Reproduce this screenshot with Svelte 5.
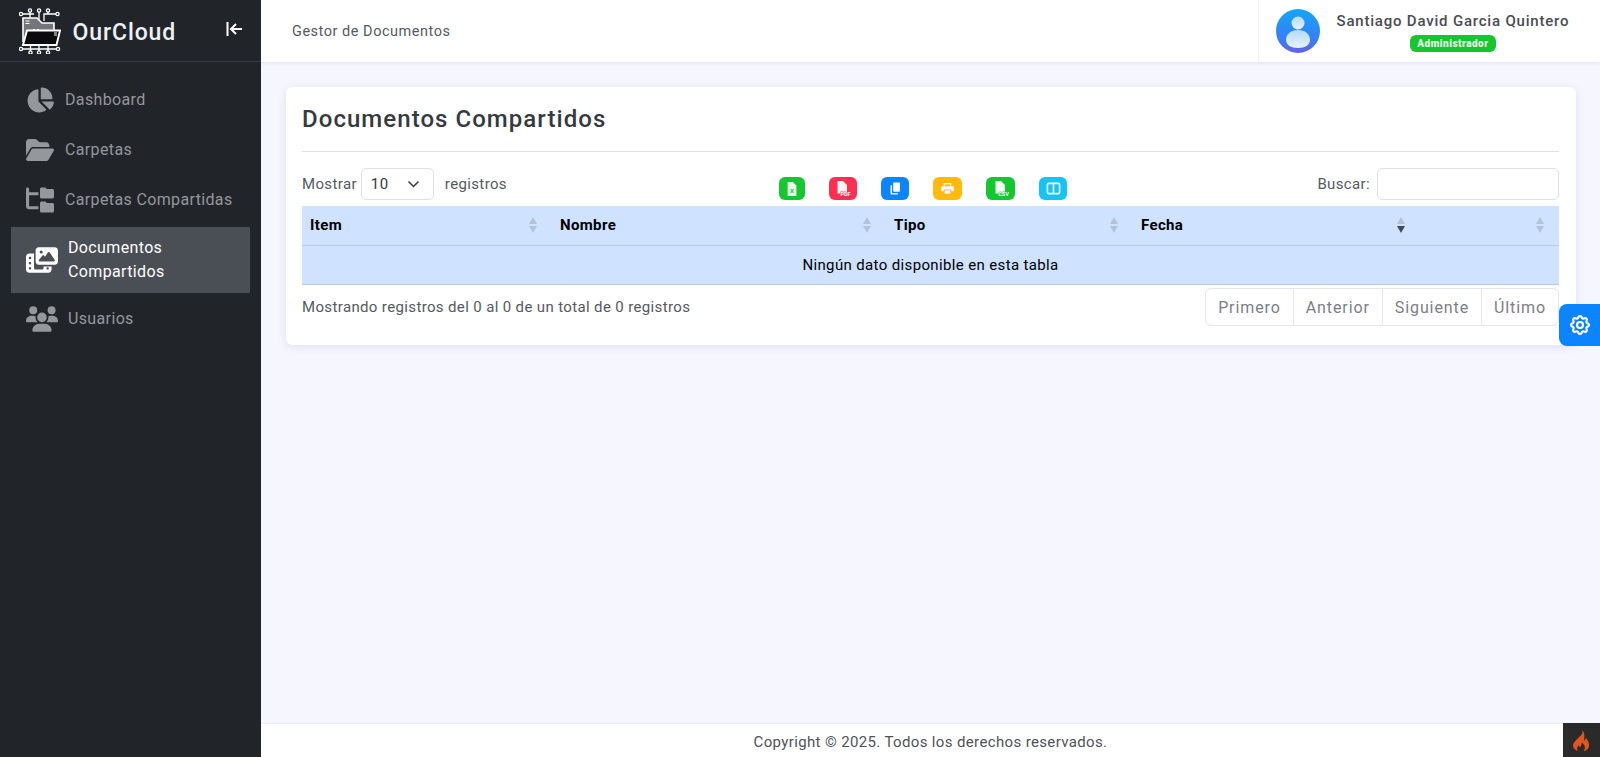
<script>
  const menu = [
    { label: 'Dashboard', w: 28, vb: '0 0 576 512', d: 'M304 240V16.6c0-9 7-16.6 16-16.6C443.7 0 544 100.3 544 224c0 9-7.6 16-16.6 16H304zM32 272C32 150.7 122.1 50.3 239 34.3c9.2-1.3 17 6.1 17 15.4V288L412.5 444.5c6.7 6.7 6.2 17.7-1.5 23.1C371.8 495.6 323.8 512 272 512C139.5 512 32 404.6 32 272zm526.4 16c9.3 0 16.6 7.8 15.4 17c-7.7 55.9-34.6 105.6-73.9 142.3c-6 5.6-15.4 5.2-21.2-.7L320 288H558.4z' },
    { label: 'Carpetas', w: 28, vb: '0 0 576 512', d: 'M88.7 223.8L0 375.8V96C0 60.7 28.7 32 64 32H181.5c17 0 33.3 6.7 45.3 18.7l26.5 26.5c12 12 28.3 18.7 45.3 18.7H416c35.3 0 64 28.7 64 64v32H144c-22.8 0-43.8 12.1-55.3 31.8zm27.6 16.1C122.1 230 132.6 224 144 224H544c11.5 0 22 6.1 27.7 16.1s5.7 22.2-.1 32.1l-112 192C453.9 474 443.4 480 432 480H32c-11.5 0-22-6.1-27.7-16.1s-5.7-22.2 .1-32.1l112-192z' },
    { label: 'Carpetas Compartidas', w: 28, vb: '0 0 576 512', d: 'M64 32C64 14.3 49.7 0 32 0S0 14.3 0 32v96V384c0 35.3 28.7 64 64 64H256V384H64V160H256V96H64V32zM288 192c0 17.7 14.3 32 32 32H544c17.7 0 32-14.3 32-32V64c0-17.7-14.3-32-32-32H445.3c-8.5 0-16.6-3.4-22.6-9.4L409.4 9.4c-6-6-14.1-9.4-22.6-9.4H320c-17.7 0-32 14.3-32 32V192zm0 288c0 17.7 14.3 32 32 32H544c17.7 0 32-14.3 32-32V352c0-17.7-14.3-32-32-32H445.3c-8.5 0-16.6-3.4-22.6-9.4l-13.3-13.3c-6-6-14.1-9.4-22.6-9.4H320c-17.7 0-32 14.3-32 32V480z' },
    { label: 'Documentos Compartidos', active: true, w: 32, vb: '0 0 640 512', d: 'M256 0H576c35.3 0 64 28.7 64 64V288c0 35.3-28.7 64-64 64H256c-35.3 0-64-28.7-64-64V64c0-35.3 28.7-64 64-64zM476 106.7C471.5 100 464 96 456 96s-15.5 4-20 10.7l-56 84L362.7 169c-4.6-5.7-11.5-9-18.7-9s-14.2 3.3-18.7 9l-64 80c-5.8 7.2-6.9 17.1-2.9 25.4s12.4 13.6 21.6 13.6h80 48H552c8.9 0 17-4.9 21.2-12.7s3.7-17.3-1.2-24.6l-96-144zM336 96a32 32 0 1 0 -64 0 32 32 0 1 0 64 0zM64 128h96V384v32c0 17.7 14.3 32 32 32H320c17.7 0 32-14.3 32-32V384H512v64c0 35.3-28.7 64-64 64H64c-35.3 0-64-28.7-64-64V192c0-35.3 28.7-64 64-64zm8 64c-8.8 0-16 7.2-16 16v16c0 8.8 7.2 16 16 16H88c8.8 0 16-7.2 16-16V208c0-8.8-7.2-16-16-16H72zm0 104c-8.8 0-16 7.2-16 16v16c0 8.8 7.2 16 16 16H88c8.8 0 16-7.2 16-16V312c0-8.8-7.2-16-16-16H72zm0 104c-8.8 0-16 7.2-16 16v16c0 8.8 7.2 16 16 16H88c8.8 0 16-7.2 16-16V416c0-8.8-7.2-16-16-16H72zm336 16v16c0 8.8 7.2 16 16 16h16c8.8 0 16-7.2 16-16V416c0-8.8-7.2-16-16-16H424c-8.8 0-16 7.2-16 16z' },
    { label: 'Usuarios', w: 32, vb: '0 0 640 512', d: 'M144 0a80 80 0 1 1 0 160A80 80 0 1 1 144 0zM512 0a80 80 0 1 1 0 160A80 80 0 1 1 512 0zM0 298.7C0 239.8 47.8 192 106.7 192h42.7c15.9 0 31 3.5 44.6 9.7c-1.3 7.2-1.9 14.7-1.9 22.3c0 38.2 16.8 72.5 43.3 96c-.2 0-.4 0-.7 0H21.3C9.6 320 0 310.4 0 298.7zM405.3 320c-.2 0-.4 0-.7 0c26.6-23.5 43.3-57.8 43.3-96c0-7.6-.7-15-1.9-22.3c13.6-6.3 28.7-9.7 44.6-9.7h42.7C592.2 192 640 239.8 640 298.7c0 11.8-9.6 21.3-21.3 21.3H405.3zM224 224a96 96 0 1 1 192 0 96 96 0 1 1 -192 0zM128 485.3C128 411.7 187.7 352 261.3 352H378.7C452.3 352 512 411.7 512 485.3c0 14.7-11.9 26.7-26.7 26.7H154.7c-14.7 0-26.7-11.9-26.7-26.7z' }
  ];

  const columns = [
    { label: 'Item', width: 250 },
    { label: 'Nombre', width: 334 },
    { label: 'Tipo', width: 247 },
    { label: 'Fecha', width: 287, sorted: true },
    { label: '', width: 139 }
  ];

  const pages = ['Primero', 'Anterior', 'Siguiente', 'Último'];

  const tools = [
    { name: 'excel', color: '#14c72e', w: 26, tag: 'X', file: true },
    { name: 'pdf', color: '#ff2e53', w: 28, tag: 'PDF', file: true },
    { name: 'copy', color: '#0a84ff', w: 28 },
    { name: 'print', color: '#ffba0c', w: 29 },
    { name: 'csv', color: '#14c72e', w: 29, tag: 'CSV', file: true },
    { name: 'cols', color: '#14c4f2', w: 28 }
  ];
</script>

<div class="layout">
  <aside class="sidebar">
    <div class="brand">
      <svg class="logo" viewBox="19 7 42 46" fill="none" stroke="#fff" stroke-width="1.3">
        <circle cx="21" cy="13" r="1.6"/><circle cx="30" cy="9.500" r="1.6"/><circle cx="39" cy="9.500" r="1.6"/><circle cx="48" cy="9.500" r="1.6"/><circle cx="57.500" cy="13" r="1.6"/>
        <circle cx="21" cy="48" r="1.6"/><circle cx="30.500" cy="51.500" r="1.6"/><circle cx="39" cy="51.500" r="1.6"/><circle cx="48" cy="51.500" r="1.6"/><circle cx="58" cy="48" r="1.6"/>
        <path d="M22.500 13H34M30 11v6M39 11v8M48 11v2h-4v7M44 13h12M22.500 48h34M30.500 43v7M39 43v7M48 43v7"/>
        <path d="M23 41V17h14l5 5h12v8" fill="#737578" stroke-width="1.6"/>
        <path d="M23 44l4-14.500h33L56.500 44z" fill="#0b0b0d" stroke-width="1.9"/>
        <path d="M25.500 20h4M25.500 22.500h4M33 28.500h2M37 28.500h2M54 32h3M54 34h3" stroke-width="1"/>
      </svg>
      <span class="brand-name">OurCloud</span>
      <svg class="collapse" viewBox="0 0 18 14" fill="none" stroke="#fff" stroke-width="2">
        <path d="M1.500 0v14M16 7H5M10 2L5 7l5 5"/>
      </svg>
    </div>
    <nav class="menu">
      {#each menu as item}
        <a href="#top" class="menu-item" class:active={item.active}>
          <svg class="menu-icon" style="width:{item.w}px" viewBox={item.vb} fill="currentColor"><path d={item.d}/></svg>
          <span class:wide={item.w === 32}>{item.label}</span>
        </a>
      {/each}
    </nav>
  </aside>

  <div class="main">
    <header class="topbar">
      <div class="crumb">Gestor de Documentos</div>
      <div class="user">
        <svg class="avatar" viewBox="0 0 44 44">
          <defs>
            <linearGradient id="av" x1="0" y1="0" x2="0" y2="1">
              <stop offset="0" stop-color="#12a6f8"/><stop offset="0.7" stop-color="#3a7df6"/><stop offset="1" stop-color="#6a5fe8"/>
            </linearGradient>
            <linearGradient id="pf" x1="0" y1="0" x2="0" y2="1">
              <stop offset="0" stop-color="#b4dcfa"/><stop offset="1" stop-color="#e6f2fd"/>
            </linearGradient>
          </defs>
          <circle cx="22" cy="22" r="22" fill="url(#av)"/>
          <circle cx="22" cy="14" r="6.500" fill="url(#pf)"/>
          <path d="M10 31c0-6 5-10 12-10s12 4 12 10c0 5-5 8-12 8s-12-3-12-8z" fill="url(#pf)"/>
        </svg>
        <div class="user-info">
          <div class="user-name">Santiago David Garcia Quintero</div>
          <span class="role">Administrador</span>
        </div>
      </div>
    </header>

    <main class="content">
      <section class="card">
        <h1>Documentos Compartidos</h1>
        <div class="controls">
          <div class="length">
            <span>Mostrar</span>
            <div class="select">10
              <svg viewBox="0 0 12 8" fill="none" stroke="#343a40" stroke-width="1.5"><path d="M1 1.500l5 5 5-5"/></svg>
            </div>
            <span class="after">registros</span>
          </div>
          <div class="tools">
            {#each tools as tool}
              <button class="tool" style="background:{tool.color};width:{tool.w}px" aria-label={tool.name}>
                {#if tool.tag === 'X'}
                  <svg viewBox="0 0 16 18" width="14" height="16">
                    <path d="M3 1h6l4 4v12H3z" fill="#fff" fill-opacity="0.9"/>
                    <text x="8" y="14" font-size="7" font-weight="700" font-family="Roboto, sans-serif" text-anchor="middle" fill={tool.color}>X</text>
                  </svg>
                {:else if tool.file}
                  <svg viewBox="0 0 18 18" width="18" height="18">
                    <path d="M3.500 1h5.500l4 4v8.500H3.500z" fill="#fff" fill-opacity="0.95"/>
                    <text x="11.500" y="15.500" font-size="5.500" font-weight="700" font-family="Roboto, sans-serif" text-anchor="middle" letter-spacing="0" fill="#fff" stroke={tool.color} stroke-width="1" paint-order="stroke">{tool.tag}</text>
                  </svg>
                {:else if tool.name === 'copy'}
                  <svg viewBox="0 0 16 16" width="15" height="15" fill="#fff">
                    <path d="M6.500 1.500h5.200a1 1 0 0 1 1 1v8a1 1 0 0 1-1 1H6.500a1 1 0 0 1-1-1v-8a1 1 0 0 1 1-1z"/>
                    <path d="M4.300 4.500v7.700a.9.900 0 0 0 .9.900h5.300v1.400H4a1.300 1.300 0 0 1-1.300-1.300V4.500z"/>
                  </svg>
                {:else if tool.name === 'print'}
                  <svg viewBox="0 0 16 16" width="15" height="15" fill="#fff">
                    <path d="M4 2h8v3h-1.400V3.400H5.400V5H4z"/>
                    <path d="M2.500 5.500h11a1.200 1.200 0 0 1 1.200 1.200v4.100H12V9H4v1.800H1.300V6.700a1.200 1.200 0 0 1 1.200-1.200z"/>
                    <path d="M5 10h6v3.500H5z"/>
                  </svg>
                {:else}
                  <svg viewBox="0 0 16 16" width="15" height="15" fill="none" stroke="#fff" stroke-width="1.700">
                    <rect x="1.500" y="2.500" width="13" height="11" rx="1.500"/><path d="M8 3v10"/>
                  </svg>
                {/if}
              </button>
            {/each}
          </div>
          <label class="search">Buscar: <input type="text" /></label>
        </div>

        <table>
          <colgroup>
            {#each columns as col}<col style="width:{col.width}px" />{/each}
          </colgroup>
          <thead>
            <tr>
              {#each columns as col}
                <th>
                  <div class="th-inner">
                    <span>{col.label}</span>
                    <span class="sort">
                      <i class="up"></i>
                      <i class="down" class:on={col.sorted}></i>
                    </span>
                  </div>
                </th>
              {/each}
            </tr>
          </thead>
          <tbody>
            <tr><td colspan="5">Ningún dato disponible en esta tabla</td></tr>
          </tbody>
        </table>

        <div class="table-foot">
          <div class="info">Mostrando registros del 0 al 0 de un total de 0 registros</div>
          <div class="pager">
            {#each pages as page}<a href="#top">{page}</a>{/each}
          </div>
        </div>
      </section>
    </main>

    <footer class="footer">Copyright © 2025. Todos los derechos reservados.</footer>
  </div>

  <button class="settings" aria-label="Ajustes">
    <svg viewBox="0 0 24 24" width="24" height="24" fill="none" stroke="#fff" stroke-width="2.200" stroke-linejoin="round">
      <path d="M10.325 4.317c.426-1.756 2.924-1.756 3.35 0a1.724 1.724 0 0 0 2.573 1.066c1.543-.94 3.31.826 2.37 2.37a1.724 1.724 0 0 0 1.065 2.572c1.756.426 1.756 2.924 0 3.35a1.724 1.724 0 0 0-1.066 2.573c.94 1.543-.826 3.31-2.37 2.37a1.724 1.724 0 0 0-2.572 1.065c-.426 1.756-2.924 1.756-3.35 0a1.724 1.724 0 0 0-2.573-1.066c-1.543.94-3.31-.826-2.37-2.37a1.724 1.724 0 0 0-1.065-2.572c-1.756-.426-1.756-2.924 0-3.35a1.724 1.724 0 0 0 1.066-2.573c-.94-1.543.826-3.31 2.37-2.37c1 .608 2.296.07 2.572-1.065z"/>
      <circle cx="12" cy="12" r="3"/>
    </svg>
  </button>

  <div class="ci-bar">
    <svg viewBox="0 0 20 22" width="19" height="21">
      <path d="M11 0c1 4-2 6-5 9C3 12 1 14 1 16c0 3 2 5 5 6-1-2-1-4 1-6 0 1 1 2 2 1.500 1-1 .5-3 1.500-4.500 2 2 3.500 4 3 6.500-.2 1.200-.8 2-1.500 3 3-.5 6-3 6-6.500 0-3.500-2-6-3.500-8-.2 1.500-.8 2.500-2 3C13 8 14 4 11 0z" fill="#e0561c"/>
    </svg>
  </div>
</div>

<style>
  :global(body) {
    margin: 0;
    background: #f6f6fe;
    font-family: Roboto, 'Liberation Sans', sans-serif;
    font-size: 15px;
    letter-spacing: 0.36px;
    color: #555a60;
  }

  .layout {
    display: flex;
    height: 757px;
    overflow: hidden;
  }

  .sidebar {
    width: 261px;
    flex-shrink: 0;
    background: #212529;
  }

  .brand {
    display: flex;
    align-items: center;
    height: 62px;
    box-sizing: border-box;
    padding: 0 17px 0 19px;
    border-bottom: 1px solid #353a42;
  }

  .logo {
    width: 42px;
    height: 46px;
    flex-shrink: 0;
  }

  .brand-name {
    margin-left: 11.5px;
    padding-top: 3px;
    font-size: 23px;
    letter-spacing: 0.9px;
    font-weight: 500;
    color: #eef1f4;
  }

  .collapse {
    width: 18px;
    height: 14px;
    margin-left: auto;
    margin-bottom: 4px;
  }

  .menu {
    display: flex;
    flex-direction: column;
    align-items: stretch;
    padding: 12.5px 11px 0;
  }

  .menu-item {
    display: flex;
    align-items: center;
    gap: 11px;
    height: 50px;
    padding: 0 15px;
    color: #94979c;
    font-size: 16px;
    text-decoration: none;
    line-height: 24px;
  }

  .menu-item.active {
    height: 66px;
    margin: 2px 0 1px;
    background: #4a4e55;
    color: #fff;
  }

  .menu-item .wide {
    margin-left: -1px;
    width: 130px;
  }

  .menu-icon {
    flex-shrink: 0;
    height: 26px;
  }

  .main {
    flex: 1;
    min-width: 0;
    display: flex;
    flex-direction: column;
  }

  .topbar {
    display: flex;
    justify-content: space-between;
    height: 62px;
    flex-shrink: 0;
    background: #fff;
    box-shadow: 0 1px 4px rgba(90, 90, 200, 0.14);
  }

  .crumb {
    align-self: center;
    padding-left: 31px;
    font-size: 14.5px;
    letter-spacing: 0.52px;
  }

  .user {
    display: flex;
    align-items: center;
    width: 342px;
    box-sizing: border-box;
    padding-left: 17px;
    border-left: 1px solid #eef0f4;
  }

  .avatar {
    width: 44px;
    height: 44px;
    flex-shrink: 0;
  }

  .user-info {
    margin-left: 16.5px;
    padding-top: 2px;
    text-align: center;
  }

  .user-name {
    font-weight: 500;
    font-size: 15px;
    letter-spacing: 0.8px;
    color: #4a4d52;
  }

  .role {
    display: inline-block;
    margin-top: 5px;
    padding: 0 7px;
    height: 17px;
    line-height: 17px;
    border-radius: 6px;
    background: #14c72e;
    color: #e8fbea;
    font-size: 10px;
    letter-spacing: 0.5px;
    font-weight: 900;
    vertical-align: top;
  }

  .content {
    flex: 1;
    padding: 25px 24px 0 25px;
  }

  .card {
    background: #fff;
    border-radius: 6px;
    padding: 0 17px 19px 16px;
    box-shadow: 0 2px 8px rgba(90, 90, 200, 0.14);
  }

  h1 {
    margin: 0;
    padding: 17px 0 16px;
    line-height: 31px;
    font-size: 24px;
    letter-spacing: 1.05px;
    font-weight: 500;
    color: #343a40;
    border-bottom: 1px solid #dee2e6;
  }

  .controls {
    position: relative;
    display: flex;
    justify-content: space-between;
    align-items: flex-start;
    height: 54px;
    padding-top: 16px;
    box-sizing: border-box;
  }

  .length {
    display: flex;
    align-items: center;
    gap: 4px;
    height: 32px;
  }

  .select {
    display: flex;
    align-items: center;
    justify-content: space-between;
    width: 73px;
    height: 32px;
    box-sizing: border-box;
    padding: 0 13px 0 9px;
    border: 1px solid #dee2e6;
    border-radius: 5px;
    color: #343a40;
  }

  .select svg {
    width: 13px;
    height: 8px;
  }

  .after {
    margin-left: 7px;
  }

  .tools {
    position: absolute;
    left: 477px;
    top: 25px;
    display: flex;
    gap: 24px;
  }

  .tool {
    display: flex;
    align-items: center;
    justify-content: center;
    height: 23px;
    padding: 0;
    border: none;
    border-radius: 6px;
  }

  .search {
    display: flex;
    align-items: center;
    gap: 7px;
    height: 32px;
  }

  .search input {
    width: 182px;
    height: 32px;
    box-sizing: border-box;
    border: 1px solid #dee2e6;
    border-radius: 5px;
    background: #fff;
  }

  table {
    width: 100%;
    table-layout: fixed;
    border-collapse: separate;
    border-spacing: 0;
    background: #cfe2ff;
    color: #000;
    font-size: 15px;
  }

  th {
    height: 40px;
    padding: 0 12px 2px 8px;
    box-sizing: border-box;
    text-align: left;
    font-weight: 700;
    border-bottom: 1px solid #b8cbe6;
  }

  .th-inner {
    display: flex;
    justify-content: space-between;
    align-items: center;
  }

  .sort {
    display: flex;
    flex-direction: column;
    gap: 2px;
    margin-right: 3px;
  }

  .sort i {
    display: block;
    width: 0;
    height: 0;
    border-left: 4px solid transparent;
    border-right: 4px solid transparent;
  }

  .up {
    border-bottom: 7px solid #b3c2d9;
  }

  .down {
    border-top: 7px solid #b3c2d9;
  }

  .down.on {
    border-top-color: #3f4a5c;
  }

  td {
    height: 39px;
    box-sizing: border-box;
    text-align: center;
    padding: 0;
    border-bottom: 1px solid #b8cbe6;
    font-size: 15px;
  }

  .table-foot {
    display: flex;
    justify-content: space-between;
    align-items: center;
    padding-top: 3px;
  }

  .pager {
    display: flex;
    height: 38px;
    box-sizing: border-box;
    border: 1px solid #e3e6ea;
    border-radius: 6px;
    font-size: 16px;
    letter-spacing: 0.9px;
  }

  .pager a {
    display: flex;
    align-items: center;
    padding: 0 12px;
    color: #7b7f85;
    text-decoration: none;
    border-left: 1px solid #e3e6ea;
  }

  .pager a:first-child {
    border-left: none;
  }

  .footer {
    height: 34px;
    flex-shrink: 0;
    background: #fff;
    border-top: 1px solid #eceef3;
    box-sizing: border-box;
    line-height: 36px;
    text-align: center;
    color: #4f5358;
    font-size: 15px;
  }

  .settings {
    position: fixed;
    right: 0;
    top: 304px;
    width: 41px;
    height: 42px;
    display: flex;
    align-items: center;
    justify-content: center;
    padding: 0;
    border: none;
    border-radius: 8px 0 0 8px;
    background: #0a84ff;
  }

  .ci-bar {
    position: fixed;
    right: 0;
    bottom: 0;
    width: 37px;
    height: 34px;
    display: flex;
    align-items: center;
    justify-content: center;
    background: #2a2a2a;
  }
</style>
